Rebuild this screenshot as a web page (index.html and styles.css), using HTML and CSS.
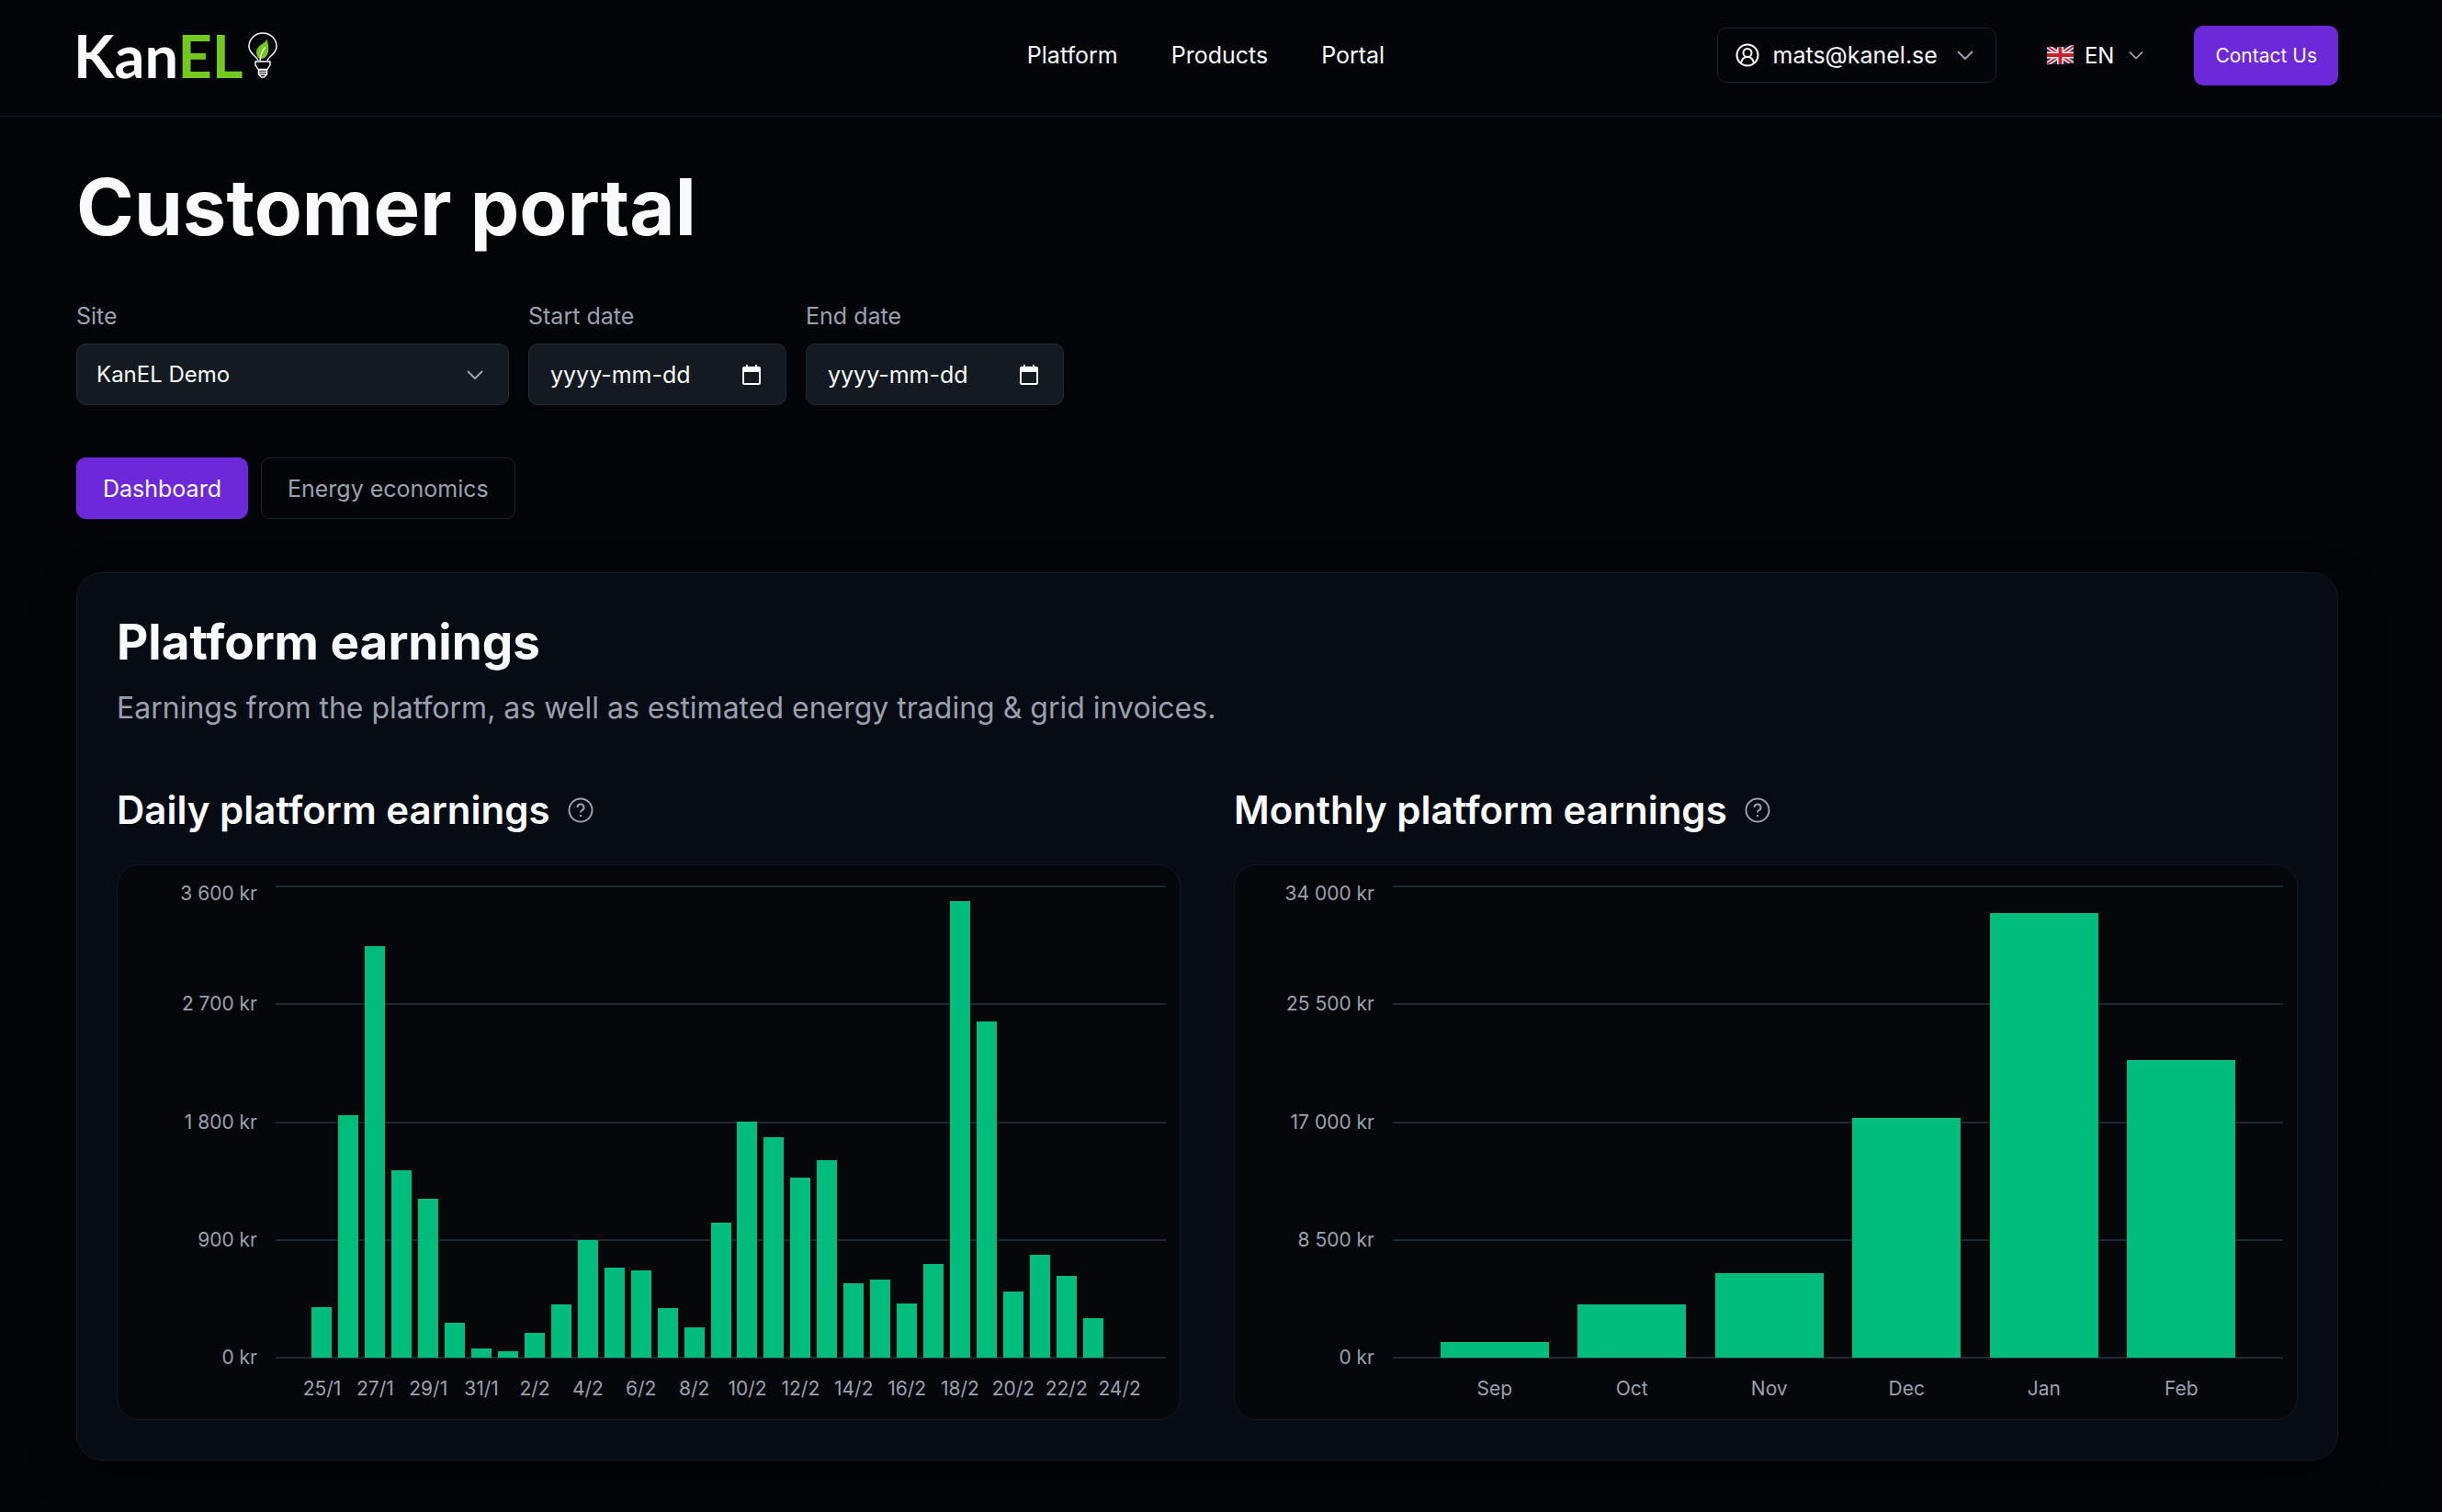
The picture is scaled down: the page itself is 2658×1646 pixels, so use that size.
FILE: index.html
```
<!DOCTYPE html>
<html lang="en">
<head>
  <meta charset="UTF-8">
  <title>KanEL - Customer portal</title>
  <meta name="viewport" content="width=device-width, initial-scale=1.0">
  <link rel="stylesheet" href="styles.css">
</head>
<body>
  <header class="header">
    <a class="logo" href="#">
      <span class="logo-text">Kan<span class="logo-green">EL</span></span>
      <svg class="logo-bulb" viewBox="0 0 32 50" fill="none" stroke="#f9fafb" stroke-width="1.5" stroke-linejoin="round">
        <path d="M11 31C10 26 1 24 1 15.500a15 14.500 0 0 1 30 0C31 24 22 26 21 31"/>
        <path d="M8 32h16v4q-1 1-3 4.500H11Q9 37 8 36z"/>
        <path d="M11.500 41h9v5l-3 3h-3l-3-3zM11.500 43.500h9M12 46h8"/>
        <path d="M20.500 7.500C22 14 24 20 20 26c-2 3-6 4-9 2-3-5-2.500-10 2-13.500 3-2.500 6-3 7.500-7z" fill="#73ca1f" stroke="none"/>
        <path d="M18.500 16.500c-3.500 4-5 8.500-5.500 15"/>
      </svg>
    </a>

    <nav class="nav">
      <a href="#">Platform</a>
      <a href="#">Products</a>
      <a href="#">Portal</a>
    </nav>

    <div class="actions">
      <button class="user-btn" type="button">
        <svg class="user-icon" viewBox="0 0 26 26" fill="none" stroke="currentColor" stroke-width="2">
          <circle cx="13" cy="13" r="11.500"/>
          <circle cx="13" cy="10.500" r="4.500"/>
          <path d="M6 21.500c1-4.500 3.500-6.500 7-6.500s6 2 7 6.500"/>
        </svg>
        <span>mats@kanel.se</span>
        <svg class="chevron" viewBox="0 0 18 10"><path d="M1 1l8 8 8-8"/></svg>
      </button>

      <button class="lang-btn" type="button">
        <svg class="flag" viewBox="0 0 29 22">
          <clipPath id="flagShape"><path d="M0 2.500C5 .500 9 3 14 2.500S23 .500 29 0v19.500c-5 0-9 1.500-14 1.500S5 20 0 21.500z"/></clipPath>
          <g clip-path="url(#flagShape)">
            <path fill="#2b3550" d="M0 0h29v22H0z"/>
            <path stroke="#f0f0f2" stroke-width="5" d="M0 1l29 20M0 21L29 1"/>
            <path stroke="#c8202f" stroke-width="2" d="M0 1l29 20M0 21L29 1"/>
            <path stroke="#f0f0f2" stroke-width="7" d="M14.500 0v22M0 11h29"/>
            <path stroke="#c8202f" stroke-width="4" d="M14.500 0v22M0 11h29"/>
          </g>
        </svg>
        <span>EN</span>
        <svg class="chevron" viewBox="0 0 18 10"><path d="M1 1l8 8 8-8"/></svg>
      </button>

      <button class="contact-btn" type="button">Contact Us</button>
    </div>
  </header>

  <main class="main">
    <h1>Customer portal</h1>

    <form class="filters">
      <div class="field field-site">
        <label for="site">Site</label>
        <div class="control">
          <select id="site">
            <option>KanEL Demo</option>
          </select>
          <svg class="chevron control-icon" viewBox="0 0 18 10"><path d="M1 1l8 8 8-8"/></svg>
        </div>
      </div>
      <div class="field field-date">
        <label for="startDate">Start date</label>
        <div class="control">
          <input type="text" id="startDate" placeholder="yyyy-mm-dd">
          <svg class="calendar control-icon" viewBox="0 0 20 22"><path fill-rule="evenodd" d="M4 0h2v2h8V0h2v2h2q2 0 2 2v16q0 2-2 2H2q-2 0-2-2V4q0-2 2-2h2zM2 8v12h16V8z"/></svg>
        </div>
      </div>
      <div class="field field-date">
        <label for="endDate">End date</label>
        <div class="control">
          <input type="text" id="endDate" placeholder="yyyy-mm-dd">
          <svg class="calendar control-icon" viewBox="0 0 20 22"><path fill-rule="evenodd" d="M4 0h2v2h8V0h2v2h2q2 0 2 2v16q0 2-2 2H2q-2 0-2-2V4q0-2 2-2h2zM2 8v12h16V8z"/></svg>
        </div>
      </div>
    </form>

    <div class="tabs">
      <button class="tab active" type="button">Dashboard</button>
      <button class="tab" type="button">Energy economics</button>
    </div>

    <section class="card">
      <h2>Platform earnings</h2>
      <p class="subtitle">Earnings from the platform, as well as estimated energy trading &amp; grid invoices.</p>

      <div class="charts">
        <div class="chart-col">
          <h3>Daily platform earnings
            <svg class="help" viewBox="0 0 28 28"><circle cx="14" cy="14" r="12.500"/><path d="M10.500 11a3.500 3.500 0 1 1 5 3.200c-1 .500-1.500 1-1.500 2.300M14 19v2"/></svg>
          </h3>
          <div class="chart" id="dailyChart"></div>
        </div>
        <div class="chart-col">
          <h3>Monthly platform earnings
            <svg class="help" viewBox="0 0 28 28"><circle cx="14" cy="14" r="12.500"/><path d="M10.500 11a3.500 3.500 0 1 1 5 3.200c-1 .500-1.500 1-1.500 2.300M14 19v2"/></svg>
          </h3>
          <div class="chart chart-monthly" id="monthlyChart"></div>
        </div>
      </div>
    </section>
  </main>

  <script>
    const daily = [388, 1853, 3144, 1432, 1212, 267, 70, 47, 190, 407, 898, 686, 667, 381, 232, 1032,
      1802, 1684, 1375, 1509, 568, 599, 414, 719, 3489, 2570, 502, 786, 625, 302, 0];

    // 25 Jan - 24 Feb, every second day gets a label
    const dailyData = daily.map((value, i) => {
      const day = 25 + i;
      const label = day > 31 ? `${day - 31}/2` : `${day}/1`;
      return { value, label: i % 2 === 0 ? label : "" };
    });

    const monthlyData = [
      { label: "Sep", value: 1127 },
      { label: "Oct", value: 3844 },
      { label: "Nov", value: 6098 },
      { label: "Dec", value: 17310 },
      { label: "Jan", value: 32080 },
      { label: "Feb", value: 21490 }
    ];

    function formatKr(n) {
      return String(n).replace(/(\d)(?=(\d{3})+$)/g, "$1 ") + " kr";
    }

    function drawChart(id, data, max) {
      const ticks = [4, 3, 2, 1, 0].map(n => max / 4 * n);
      document.getElementById(id).innerHTML = `
        <div class="y-axis">${ticks.map(t => `<div class="tick">${formatKr(t)}</div>`).join("")}</div>
        <div class="plot">
          <div class="grid-lines">${ticks.map(() => `<div class="line"></div>`).join("")}</div>
          <div class="bars">${data.map(d => `<div class="slot"><div class="bar" style="height: ${d.value / max * 100}%"></div></div>`).join("")}</div>
        </div>
        <div class="x-axis">${data.map(d => `<div class="x-label">${d.label}</div>`).join("")}</div>`;
    }

    drawChart("dailyChart", dailyData, 3600);
    drawChart("monthlyChart", monthlyData, 34000);
  </script>
</body>
</html>
```

FILE: styles.css
```
* {
  box-sizing: border-box;
}

body {
  margin: 0;
  min-height: 100vh;
  background: #030509;
  color: #f9fafb;
  font-family: Inter, 'Open Sans', sans-serif;
  font-size: 25px;
}

a {
  color: inherit;
  text-decoration: none;
}

button,
input,
select {
  font-family: inherit;
  color: inherit;
}

button {
  cursor: pointer;
}

h1,
h2,
h3,
p {
  margin: 0;
}

/* header */
.header {
  display: grid;
  grid-template-columns: 1fr auto 1fr;
  align-items: center;
  height: 127px;
  padding: 0 113px 6px 80px;
  border-bottom: 1px solid #111a22;
}

.logo {
  display: flex;
  align-items: center;
  gap: 5px;
}

.logo-text {
  font-family: Lato, sans-serif;
  font-size: 65px;
  font-weight: 700;
  line-height: 66px;
}

.logo-green {
  color: #73ca1f;
}

.logo-bulb {
  width: 32px;
  height: 50px;
}

.nav {
  display: flex;
  gap: 58px;
}

.actions {
  display: flex;
  align-items: center;
  justify-content: flex-end;
  gap: 38px;
}

.user-btn {
  display: flex;
  align-items: center;
  height: 60px;
  padding: 0 24px 0 19px;
  border: 1px solid #1a242c;
  border-radius: 10px;
  background: none;
  font-size: 25px;
}

.user-icon {
  width: 26px;
  height: 26px;
  margin-right: 15px;
}

.chevron {
  width: 18px;
  height: 10px;
  fill: none;
  stroke: #99a1af;
  stroke-width: 2;
}

.user-btn .chevron {
  margin-left: 21px;
}

.lang-btn {
  display: flex;
  align-items: center;
  padding: 0 17px;
  border: none;
  background: none;
  font-size: 24px;
}

.flag {
  width: 29px;
  height: 22px;
  margin-right: 12px;
}

.lang-btn .chevron {
  width: 16px;
  margin-left: 16px;
}

.contact-btn {
  height: 65px;
  padding: 0 23px;
  border: none;
  border-radius: 10px;
  background: #6d28d9;
  font-size: 21px;
}

/* page */
.main {
  padding: 53px 113px 56px 83px;
}

h1 {
  margin-bottom: 56px;
  font-size: 85px;
  font-weight: 700;
  line-height: 92px;
}

.filters {
  display: flex;
  gap: 21px;
  margin-bottom: 57px;
}

.field label {
  display: block;
  margin-bottom: 14px;
  color: #99a1af;
  font-size: 25px;
  line-height: 32px;
}

.field-site {
  width: 471px;
}

.field-date {
  width: 281px;
}

.control {
  position: relative;
}

.control select,
.control input {
  display: block;
  width: 100%;
  height: 67px;
  padding: 0 23px;
  border: 1px solid #1f2a33;
  border-radius: 10px;
  background: #131a21;
  font-size: 25px;
  appearance: none;
}

.control select {
  padding: 0 21px;
  font-size: 24px;
}

.control input::placeholder {
  color: #f9fafb;
  opacity: 1;
}

/* icons sit on top of the native controls */
.control-icon {
  position: absolute;
  top: 50%;
  right: 28px;
  transform: translateY(-50%);
  pointer-events: none;
}

.calendar {
  width: 20px;
  height: 22px;
  fill: #f9fafb;
}

.tabs {
  display: flex;
  gap: 14px;
  margin-bottom: 58px;
}

.tab {
  height: 67px;
  padding: 0 28px;
  border: 1px solid #1a242c;
  border-radius: 10px;
  background: none;
  color: #99a1af;
  font-size: 25px;
}

.tab.active {
  border-color: #6d28d9;
  background: #6d28d9;
  color: #f9fafb;
}

/* earnings card */
.card {
  padding: 43px;
  border: 1px solid #141a22;
  border-radius: 28px;
  background: #070b13;
  box-shadow: 0 20px 50px rgba(0, 0, 0, 0.4);
}

h2 {
  font-size: 53px;
  font-weight: 700;
  line-height: 64px;
}

.subtitle {
  margin-top: 18px;
  color: #99a1af;
  font-size: 32px;
  line-height: 44px;
}

.charts {
  display: grid;
  grid-template-columns: 1fr 1fr;
  gap: 58px;
  margin-top: 63px;
}

h3 {
  display: flex;
  align-items: center;
  gap: 19px;
  margin-bottom: 33px;
  font-size: 42px;
  font-weight: 600;
  line-height: 52px;
}

.help {
  width: 28px;
  height: 28px;
  fill: none;
  stroke: #99a1af;
  stroke-width: 2;
}

.chart {
  display: grid;
  grid-template-columns: 172px 1fr;
  grid-template-rows: 513px auto;
  row-gap: 20px;
  padding: 23px 15px 19px 0;
  border: 1px solid #14171c;
  border-radius: 24px;
  background: #06070b;
  color: #99a1af;
  font-size: 21px;
}

.y-axis {
  display: flex;
  flex-direction: column;
  justify-content: space-between;
  padding-right: 20px;
}

.tick {
  display: flex;
  align-items: center;
  justify-content: flex-end;
  height: 0;
  line-height: 16px;
}

/* keep the top label inside the plot area */
.tick:first-child {
  align-items: flex-start;
}

.plot {
  display: grid;
}

.grid-lines,
.bars {
  grid-area: 1 / 1;
}

.grid-lines {
  display: flex;
  flex-direction: column;
  justify-content: space-between;
  margin: -1px 0;
}

.line {
  height: 2px;
  background: #1e2933;
}

.bars,
.x-axis {
  display: flex;
  padding: 0 36px;
}

.x-axis {
  grid-column: 2;
}

.slot {
  display: flex;
  flex: 1;
  align-items: flex-end;
  justify-content: center;
}

.bar {
  width: 76%;
  background: #00bd7e;
}

.chart-monthly .bar {
  width: 79%;
}

.x-label {
  display: flex;
  flex: 1 1 0;
  justify-content: center;
  width: 0;
  line-height: 28px;
  white-space: nowrap;
}
```
